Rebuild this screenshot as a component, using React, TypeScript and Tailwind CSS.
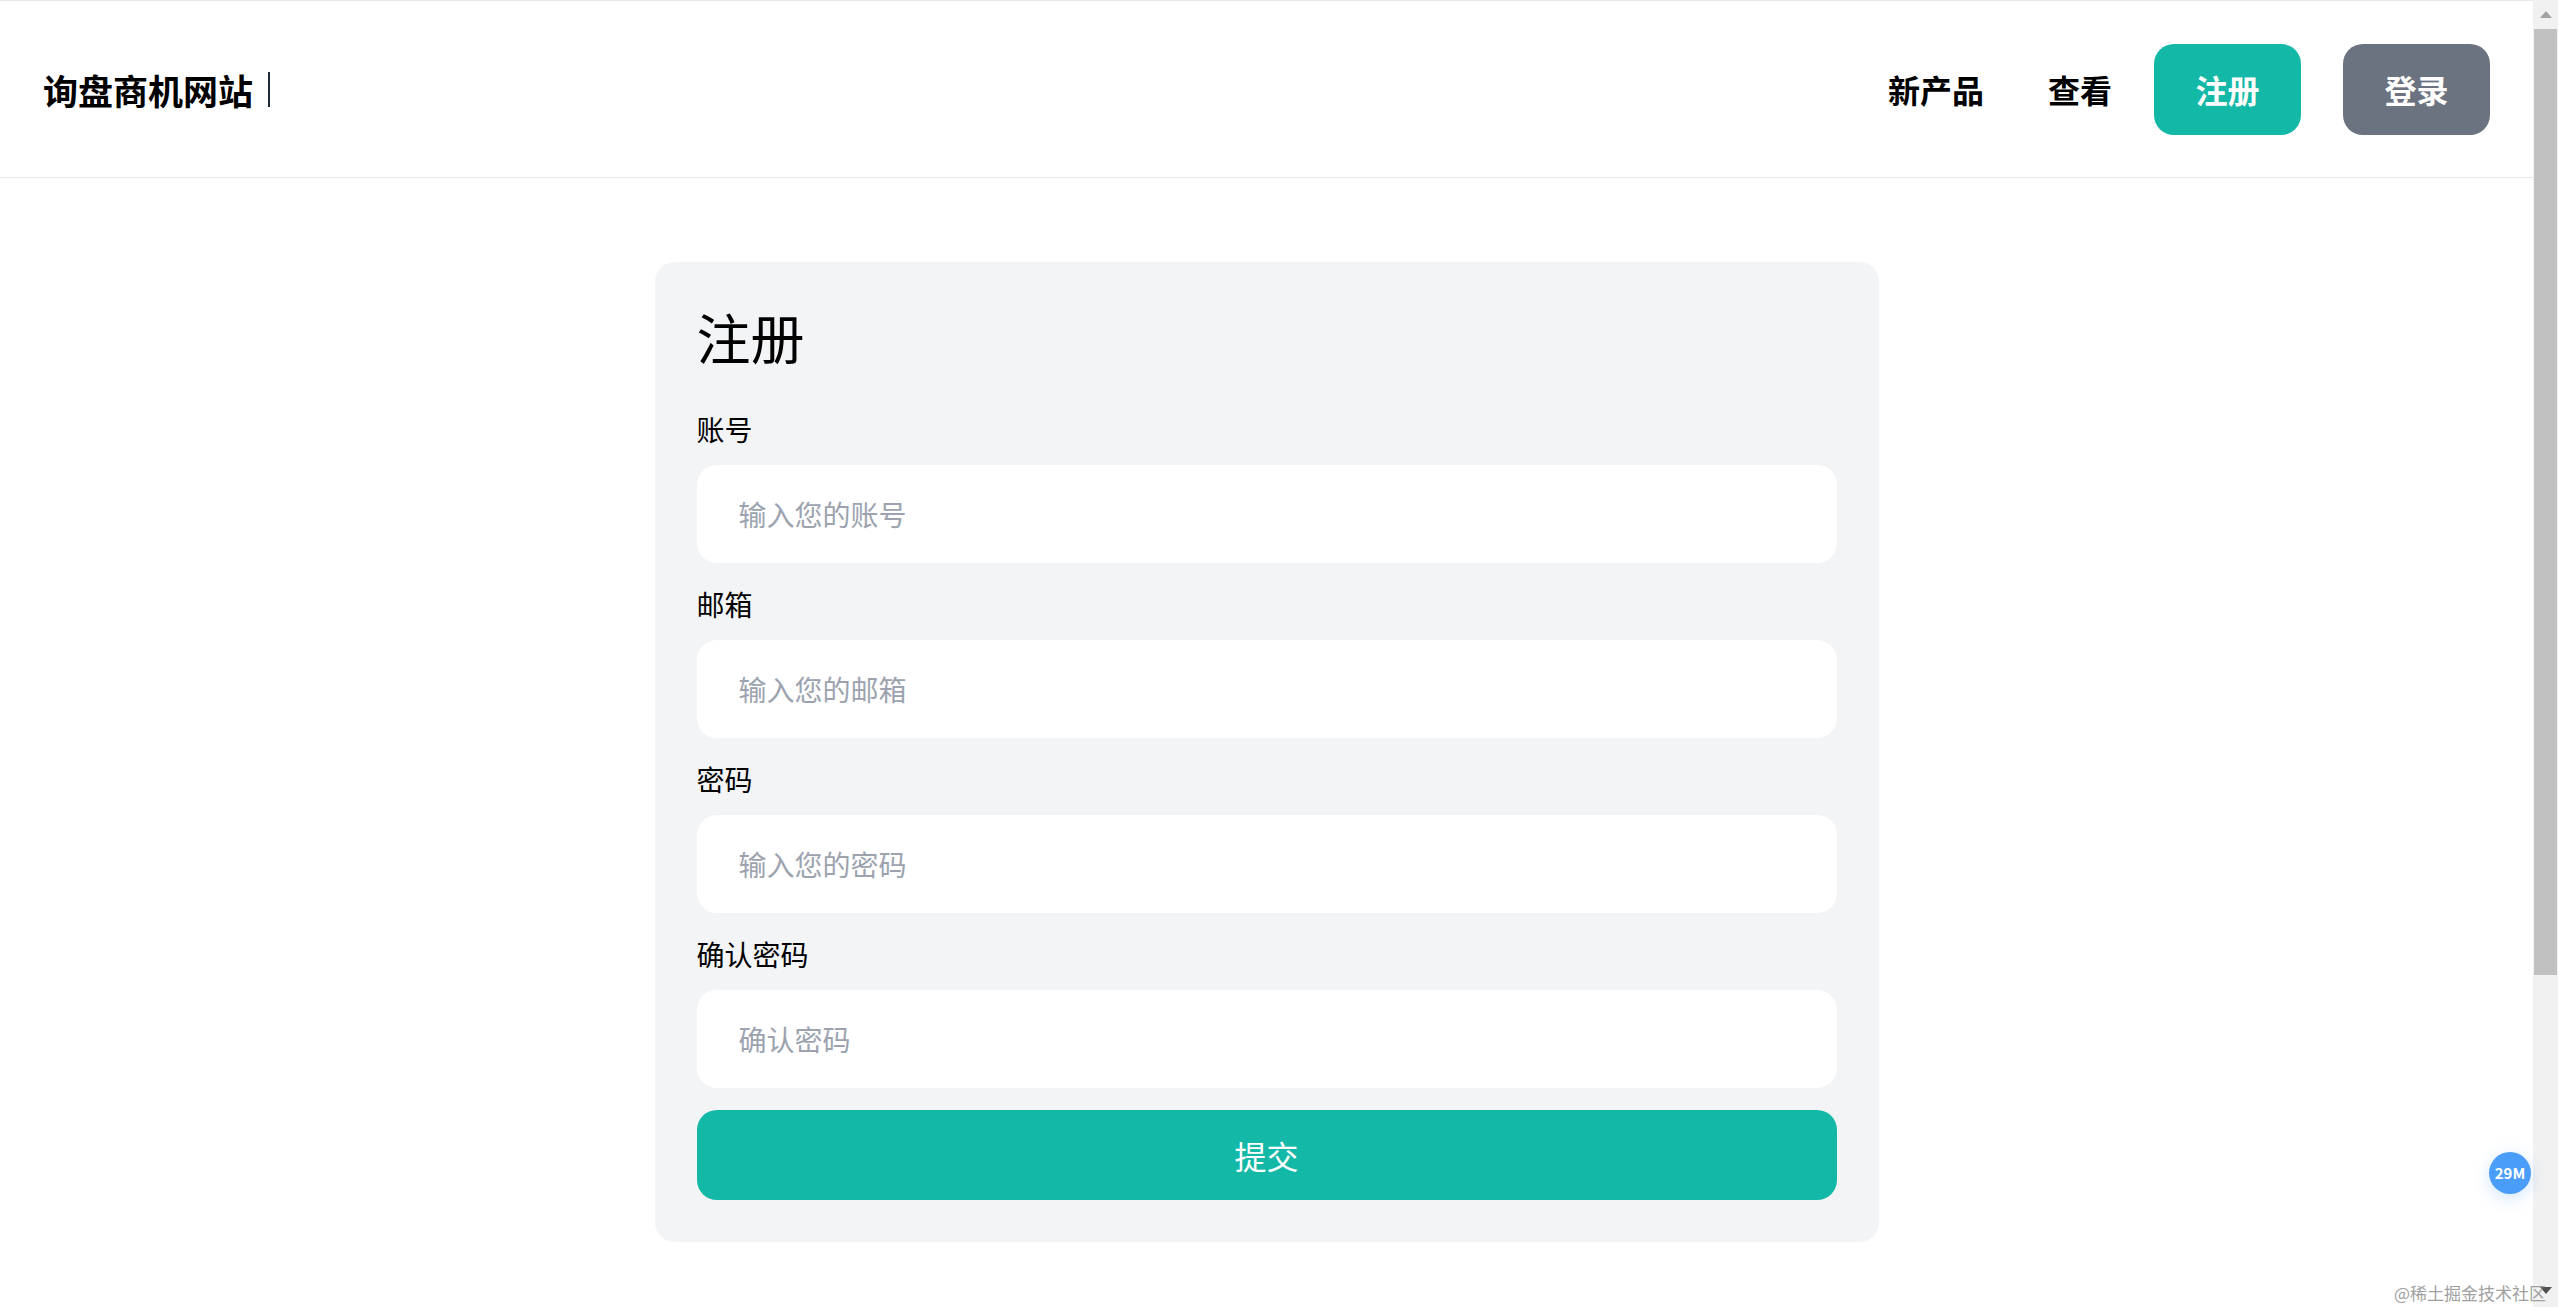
import React from "react";

const fields = [
  { label: "账号", placeholder: "输入您的账号", type: "text" },
  { label: "邮箱", placeholder: "输入您的邮箱", type: "email" },
  { label: "密码", placeholder: "输入您的密码", type: "password" },
  { label: "确认密码", placeholder: "确认密码", type: "password" },
];

function Header() {
  return (
    <header className="flex h-[178px] shrink-0 items-center justify-between border-t border-b border-gray-200 bg-white px-[43px]">
      <div className="flex items-center">
        <span className="text-[35px] font-bold leading-none text-black">询盘商机网站</span>
        <span className="ml-[15px] h-[35px] w-[2px] bg-gray-800" />
      </div>
      <nav className="flex items-center gap-[42px]">
        <a className="mr-[22px] text-[32px] font-bold leading-none text-black">新产品</a>
        <a className="text-[32px] font-bold leading-none text-black">查看</a>
        <button className="flex h-[91px] w-[147px] items-center justify-center rounded-[20px] bg-[#14b8a6] text-[32px] font-bold text-white">
          注册
        </button>
        <button className="flex h-[91px] w-[147px] items-center justify-center rounded-[20px] bg-[#6b7280] text-[32px] font-bold text-white">
          登录
        </button>
      </nav>
    </header>
  );
}

function RegisterCard() {
  return (
    <form className="mx-auto mt-[84px] flex w-[1224px] flex-col rounded-[20px] bg-[#f3f4f6] px-[42px] pt-[42px] pb-[42px]">
      <h1 className="mb-[40px] text-[54px] leading-[66px] font-normal text-black">注册</h1>
      {fields.map((f) => (
        <div key={f.label} className="mb-[22px] flex flex-col">
          <label className="mb-[16px] text-[28px] leading-[39px] text-black">{f.label}</label>
          <input
            type={f.type}
            placeholder={f.placeholder}
            className="h-[98px] w-full rounded-[20px] bg-white px-[42px] text-[28px] text-gray-900 outline-none placeholder:text-[#9ca3af]"
          />
        </div>
      ))}
      <button
        type="button"
        className="flex h-[90px] w-full items-center justify-center rounded-[20px] bg-[#14b8a6] text-[32px] text-white"
      >
        提交
      </button>
    </form>
  );
}

function FakeScrollbar() {
  return (
    <div className="flex w-[25px] shrink-0 flex-col bg-[#f1f1f1]">
      <div className="flex h-[29px] items-center justify-center">
        <svg width="12" height="7" viewBox="0 0 12 7">
          <path d="M6 0 L12 7 L0 7 Z" fill="#a3a3a3" />
        </svg>
      </div>
      <div className="mx-[1px] h-[946px] bg-[#c1c1c1]" />
      <div className="flex-1" />
      <div className="flex h-[22px] items-start justify-center pt-[2px]">
        <svg width="12" height="7" viewBox="0 0 12 7">
          <path d="M0 0 L12 0 L6 7 Z" fill="#505050" />
        </svg>
      </div>
    </div>
  );
}

export default function App() {
  return (
    <div
      className="relative flex h-[1307px] w-full overflow-hidden bg-white"
      style={{ fontFamily: '"Noto Sans CJK SC", "Noto Sans", sans-serif' }}
    >
      <main className="flex min-w-0 flex-1 flex-col">
        <Header />
        <RegisterCard />
      </main>
      <FakeScrollbar />

      <div className="absolute left-[2489px] top-[1152px] flex h-[42px] w-[42px] items-center justify-center rounded-full bg-[#4a9df8] text-[15px] font-bold text-white shadow-[0_4px_16px_rgba(74,157,248,0.25)]">
        29M
      </div>
      <div className="pointer-events-none absolute right-[12px] bottom-[6px] text-[17px] leading-none text-[#a0a0a0]">
        @稀土掘金技术社区
      </div>
    </div>
  );
}
